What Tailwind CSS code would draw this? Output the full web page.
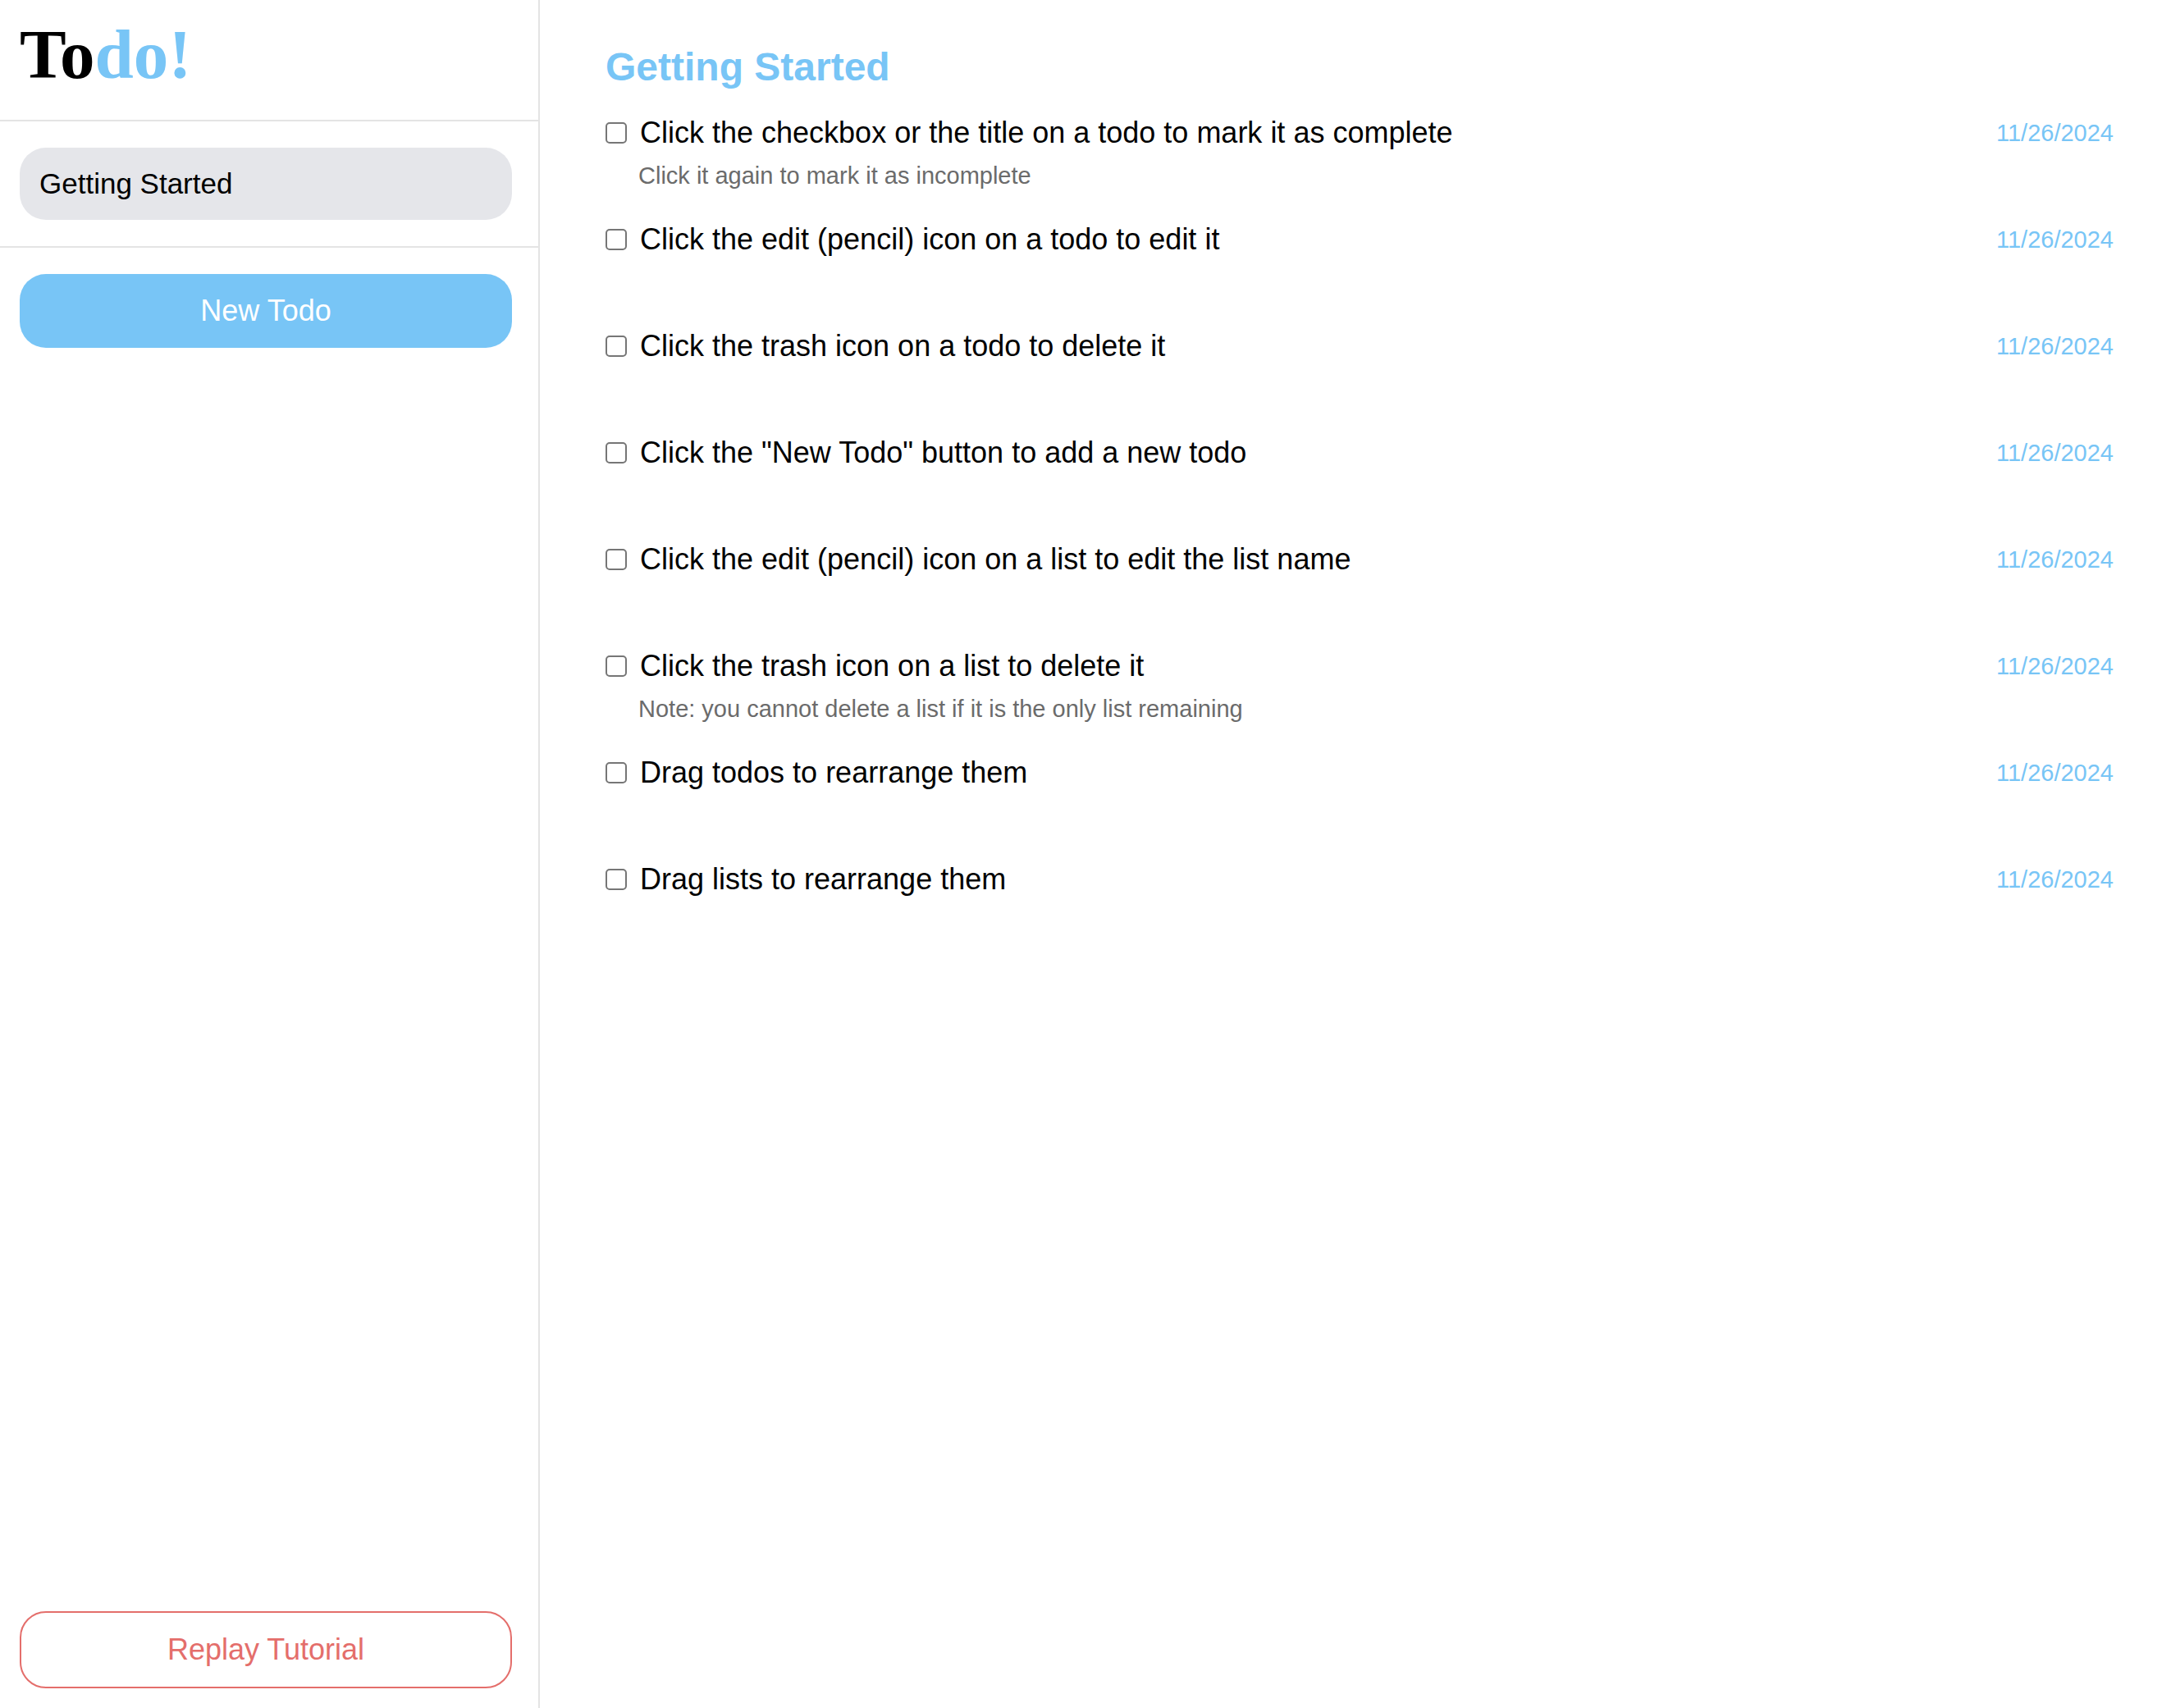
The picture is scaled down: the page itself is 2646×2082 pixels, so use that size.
<!DOCTYPE html>
<html lang="en">
<head>
<meta charset="utf-8">
<meta name="viewport" content="width=device-width, initial-scale=1">
<title>Todo!</title>
<script src="https://cdn.jsdelivr.net/npm/@tailwindcss/browser@4"></script>
</head>
<body class="flex min-h-screen bg-white font-['Liberation_Sans',Arial,sans-serif] text-4xl text-black">
  <aside class="flex w-[658px] shrink-0 flex-col border-r-2 border-[#e4e4e4]">
    <header class="border-b-2 border-[#e4e4e4] px-6 pt-[18px] pb-8">
      <h1 class="font-['Liberation_Serif','Times_New_Roman',serif] text-[85px] leading-24 font-bold">To<span class="text-[#78c5f6]">do!</span></h1>
    </header>
    <nav class="border-b-2 border-[#e4e4e4] py-8 pr-8 pl-6">
      <a href="#getting-started" class="block rounded-[32px] bg-[#e5e6ea] px-6 py-6 text-[35px] leading-10">Getting Started</a>
    </nav>
    <div class="flex flex-1 flex-col justify-between pt-8 pr-8 pb-6 pl-6">
      <button type="button" class="rounded-[32px] bg-[#78c5f6] py-[25px] leading-10 text-white">New Todo</button>
      <button type="button" class="rounded-[32px] border-2 border-[#e46e6b] py-[25px] leading-10 text-[#e46e6b]">Replay Tutorial</button>
    </div>
  </aside>
  <main id="getting-started" class="min-w-0 flex-1 pt-[52px] pr-[70px] pl-20">
    <h2 class="mb-[18px] text-5xl leading-15 font-bold text-[#78c5f6]">Getting Started</h2>
    <ul id="todos"></ul>
  </main>
  <script>
    const todos = [
      ["Click the checkbox or the title on a todo to mark it as complete", "Click it again to mark it as incomplete"],
      ["Click the edit (pencil) icon on a todo to edit it", ""],
      ["Click the trash icon on a todo to delete it", ""],
      ["Click the \"New Todo\" button to add a new todo", ""],
      ["Click the edit (pencil) icon on a list to edit the list name", ""],
      ["Click the trash icon on a list to delete it", "Note: you cannot delete a list if it is the only list remaining"],
      ["Drag todos to rearrange them", ""],
      ["Drag lists to rearrange them", ""],
    ];
    document.getElementById("todos").innerHTML = todos.map(([title, note], i) => `
      <li class="h-[130px] pt-2">
        <div class="flex h-12 items-center">
          <input type="checkbox" id="todo-${i}" class="mr-4 size-[26px] shrink-0 appearance-none rounded-[5px] border-2 border-[#767676] checked:bg-[#78c5f6]">
          <label for="todo-${i}" class="text-4xl leading-12">${title}</label>
          <time datetime="2024-11-26" class="ml-auto text-[29px] leading-12 text-[#78c5f6]">11/26/2024</time>
        </div>
        <p class="mt-2 pl-10 text-[29px] leading-10 text-[#6b6b6b]">${note}</p>
      </li>`).join("");
  </script>
</body>
</html>
